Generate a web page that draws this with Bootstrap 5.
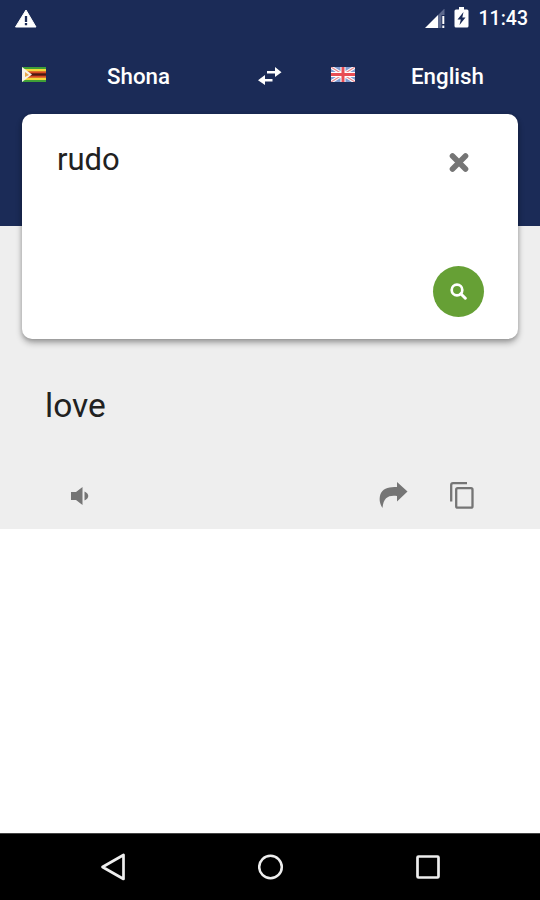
<!DOCTYPE html>
<html lang="en">
<head>
<meta charset="utf-8">
<meta name="viewport" content="width=device-width, initial-scale=1">
<title>Shona English Translator</title>
<link href="https://cdn.jsdelivr.net/npm/bootstrap@5.3.0/dist/css/bootstrap.min.css" rel="stylesheet">
<style>
  body { font-family: Roboto, "Liberation Sans", sans-serif; }
  svg { display: block; flex: none; }
  .screen { width: 540px; height: 900px; }
  .app-top { height: 226px; background: #1b2b57; }
  .status-bar { height: 38px; padding: 0 12px 0 15px; }
  .clock { font-size: 19.500px; line-height: 38px; font-weight: 500; margin-left: 10px; }
  .lang-bar { height: 76px; padding-left: 22px; }
  .lang-btn { font-size: 22.300px; line-height: 30px; font-weight: 500; color: #fff; }
  .lang-from { width: 212px; padding-left: 61px; }
  .lang-to { padding-left: 56px; }
  .flag-to { margin-left: 49px; }
  .result-area { height: 303px; background: #eee; }
  .input-card { margin: -112px 22px 0; height: 225px; flex: none; border-radius: 10px; padding: 0 34px; box-shadow: 0 4px 6px rgba(0,0,0,.3), 0 1px 4px rgba(0,0,0,.16); }
  .query { font-size: 31px; line-height: 40px; color: #212121; padding: 26px 0 0 1px; }
  .clear-btn { margin: 39px 15px 0 0; }
  .search-btn { width: 51px; height: 51px; background: #66a035; margin-bottom: 22px; }
  .answer { font-size: 33.500px; line-height: 40px; color: #212121; margin: 47px 0 0 45px; }
  .actions { margin-top: 56px; padding: 0 66px 0 71px; }
  .copy-icon { margin-left: 42px; }
  .nav-keys { height: 67px; padding: 0 100px; border-top: 1px solid #444; }
</style>
</head>
<body class="bg-white">
<div class="screen d-flex flex-column overflow-hidden">
  <header class="app-top text-white flex-shrink-0">
    <div class="status-bar d-flex align-items-center">
      <svg class="me-auto" width="22" height="20" viewBox="0 0 22 20"><path d="M11 1 21 18H.5z" fill="#fff" stroke="#fff" stroke-linejoin="round"/><path d="M11 7v6M11 14v2.200" stroke="#1b2b57" stroke-width="2.300"/></svg>
      <svg width="22" height="20" viewBox="0 0 22 20"><path d="M1 19 14 6v13z" fill="#fff"/><path d="M14 6 20.500-.5V6h-3v13H14z" fill="#5d698d"/><path d="M19.300 7v8M19.300 16.500V19" stroke="#fff" stroke-width="2"/></svg>
      <svg class="ms-2 mb-1" width="15" height="21" viewBox="0 0 15 21"><path d="M5 0h5v2.500h3q1.500 0 1.500 1.500v15q0 1.500-1.500 1.500H2q-1.500 0-1.500-1.500V4Q.5 2.500 2 2.500h3z" fill="#fff"/><path d="M9.500 5 3.500 12.500h3.300L5.500 18l6-7.500H8.300z" fill="#1b2b57"/></svg>
      <span class="clock">11:43</span>
    </div>
    <div class="lang-bar d-flex align-items-center">
      <svg class="mb-1" width="24" height="15" viewBox="0 0 24 15"><path d="M0 0h24v15H0z" fill="#3f9f36"/><path d="M0 2h24v11H0z" fill="#f2d83c"/><path d="M0 4.300h24v6.400H0z" fill="#d64a24"/><path d="M0 6.300h24v2.400H0z" fill="#4c1912"/><path d="M0 0 10 7.500 0 15z" fill="#f7f3e8"/><path d="m3 5 4 3-4 2z" fill="#e9a94b"/></svg>
      <div class="lang-btn lang-from">Shona</div>
      <svg width="24" height="18" viewBox="0 0 24 18" fill="#fff"><path d="M9 4h8V0l6.500 5.300L17 10V6.500H9zM14.500 12H7V8L0 13.300 7 18v-3.500h7.500z"/></svg>
      <svg class="flag-to mb-1" width="24" height="15" viewBox="0 0 24 15"><path d="M0 0h24v15H0z" fill="#7f9bd0"/><path d="m0 0 24 15M24 0 0 15" stroke="#fff" stroke-width="3.200"/><path d="m0 0 24 15M24 0 0 15" stroke="#e98a91" stroke-width="1.200"/><path d="M12 0v15M0 7.500h24" stroke="#fff" stroke-width="5"/><path d="M12 0v15M0 7.500h24" stroke="#e84e55" stroke-width="3"/></svg>
      <div class="lang-btn lang-to">English</div>
    </div>
  </header>
  <main class="flex-grow-1">
    <section class="result-area d-flex flex-column">
      <div class="input-card bg-white position-relative d-flex justify-content-between">
        <div class="query">rudo</div>
        <div class="d-flex flex-column justify-content-between align-items-end">
          <svg class="clear-btn" width="20" height="19" viewBox="0 0 20 19"><path d="m3.500 3 13 13m0-13-13 13" stroke="#757575" stroke-width="5.600" stroke-linecap="round"/></svg>
          <div class="search-btn rounded-circle d-flex align-items-center justify-content-center">
            <svg width="17" height="17" viewBox="0 0 17 17" fill="none" stroke="#fff"><circle cx="7" cy="7" r="5.300" stroke-width="2.700"/><path d="m10.800 10.800 4.500 4.400" stroke-width="3" stroke-linecap="round"/></svg>
          </div>
        </div>
      </div>
      <div class="answer">love</div>
      <div class="actions d-flex align-items-center">
        <svg class="me-auto" width="18" height="18" viewBox="0 0 18 18" fill="#757575"><path d="M0 5h5l6.500-5v18L5 13H0zM13.500 4.500c5 2 5 7 0 9z"/></svg>
        <svg width="29" height="27" viewBox="0 0 29 27"><path d="M18 0 28.500 9.500 18 19.500V14C10 13 4.500 15 3.500 26 0 21 0 15 2 11 5 5.500 11 5 18 5z" fill="#757575"/></svg>
        <svg class="copy-icon" width="24" height="27" viewBox="0 0 24 27" fill="none" stroke="#757575" stroke-width="2.300"><path d="M1.200 19.500V3q0-1.800 1.800-1.800h14"/><rect x="6.200" y="6.200" width="16.300" height="19.500" rx="1.500"/></svg>
      </div>
    </section>
  </main>
  <nav class="nav-keys bg-black d-flex align-items-center justify-content-between flex-shrink-0">
    <svg width="26" height="28" viewBox="0 0 26 28"><path d="M23.500 2v24L2.500 14z" fill="none" stroke="#eee" stroke-width="2.700" stroke-linejoin="round"/></svg>
    <svg width="26" height="26" viewBox="0 0 26 26"><circle cx="12.500" cy="13" r="11.300" fill="none" stroke="#eee" stroke-width="2.500"/></svg>
    <svg width="24" height="24" viewBox="0 0 24 24"><rect x="1.500" y="1.500" width="21" height="21" rx="1" fill="none" stroke="#eee" stroke-width="2.700"/></svg>
  </nav>
</div>
<script src="https://cdn.jsdelivr.net/npm/bootstrap@5.3.0/dist/js/bootstrap.bundle.min.js"></script>
</body>
</html>
